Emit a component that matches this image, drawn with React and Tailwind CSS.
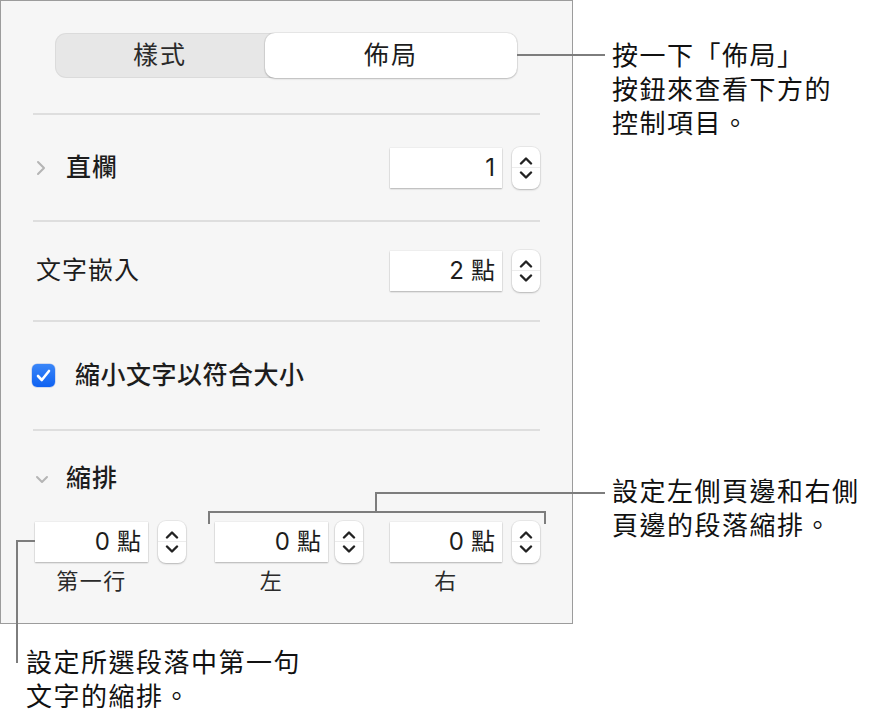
import React from "react";

const font = { fontFamily: '"Inter", "Noto Sans CJK TC", sans-serif' };

function Up() {
  return (
    <svg width="14" height="9" viewBox="0 0 14 9" fill="none">
      <polyline points="2,7.5 7,2.5 12,7.5" stroke="#222" strokeWidth="2.4" strokeLinecap="round" strokeLinejoin="round" />
    </svg>
  );
}

function Down() {
  return (
    <svg width="14" height="9" viewBox="0 0 14 9" fill="none">
      <polyline points="2,1.5 7,6.5 12,1.5" stroke="#222" strokeWidth="2.4" strokeLinecap="round" strokeLinejoin="round" />
    </svg>
  );
}

function Stepper({ className = "" }) {
  return (
    <div className={`flex h-[42px] w-[28px] shrink-0 flex-col items-center rounded-[8px] bg-white shadow-[0_0_0_1px_rgba(0,0,0,0.05),0_1px_2px_rgba(0,0,0,0.22)] ${className}`}>
      <div className="flex h-[20px] items-end justify-center pb-[2px]">
        <Up />
      </div>
      <div className="h-px w-full bg-[#ececec]" />
      <div className="flex h-[21px] items-start justify-center pt-[3px]">
        <Down />
      </div>
    </div>
  );
}

function Field({ value, unit, className = "" }) {
  return (
    <div className={`flex h-[40px] shrink-0 items-center justify-end gap-[7px] bg-white pr-[7px] text-[24px] text-[#1d1d1d] shadow-[0_0_0_0.5px_rgba(0,0,0,0.06),0_1px_1.5px_rgba(0,0,0,0.25)] ${className}`}>
      <span>{value}</span>
      {unit && <span>{unit}</span>}
    </div>
  );
}

function Divider() {
  return <div className="h-[2px] bg-[#dedede]" />;
}

export default function App() {
  return (
    <div className="relative h-[713px] w-[870px] overflow-hidden bg-white" style={font}>
      {/* panel */}
      <div className="h-[624px] w-[573px] border border-[#9c9c9c] bg-[#f6f6f6] px-[32px]">
        {/* segmented */}
        <div className="ml-[22px] mr-[23px] mt-[32px] flex h-[45px] rounded-[11px] bg-[#e7e7e7] shadow-[inset_0_0_0_1px_rgba(0,0,0,0.05)]">
          <div className="flex w-[210px] items-center justify-center text-[25px] tracking-[2px] text-[#2a2a2a]">樣式</div>
          <div className="flex flex-1 items-center justify-center rounded-[10px] bg-white text-[25px] tracking-[2px] text-[#1d1d1d] shadow-[0_0_0_1px_rgba(0,0,0,0.06),0_1px_2px_rgba(0,0,0,0.2)]">佈局</div>
        </div>

        <div className="mt-[35px]">
          <Divider />
        </div>

        {/* 直欄 */}
        <div className="flex h-[105px] items-center">
          <svg className="ml-[3px]" width="10" height="16" viewBox="0 0 10 16" fill="none">
            <polyline points="2,2 8,8 2,14" stroke="#b5b5b5" strokeWidth="2" strokeLinecap="round" strokeLinejoin="round" />
          </svg>
          <span className="ml-[20px] text-[25px] font-medium tracking-[1px] text-[#1d1d1d]">直欄</span>
          <Field value="1" className="ml-auto w-[112px]" />
          <Stepper className="ml-[10px]" />
        </div>
        <Divider />

        {/* 文字嵌入 */}
        <div className="flex h-[98px] items-center">
          <span className="ml-[3px] text-[25px] tracking-[1px] text-[#1d1d1d]">文字嵌入</span>
          <Field value="2" unit="點" className="ml-auto w-[112px]" />
          <Stepper className="ml-[10px]" />
        </div>
        <Divider />

        {/* checkbox */}
        <div className="flex h-[107px] items-center">
          <div className="-ml-px flex h-[23px] w-[23px] items-center justify-center rounded-[5px] bg-[linear-gradient(#3a86f8,#0f62f2)] shadow-[0_0_0_0.5px_rgba(0,60,200,0.3)]">
            <svg width="15" height="13" viewBox="0 0 15 13" fill="none">
              <polyline points="2,7 5.8,11 13,2" stroke="#fff" strokeWidth="2.6" strokeLinecap="round" strokeLinejoin="round" />
            </svg>
          </div>
          <span className="ml-[20px] text-[25px] font-medium tracking-[0.5px] text-[#1d1d1d]">縮小文字以符合大小</span>
        </div>
        <Divider />

        {/* 縮排 */}
        <div className="flex h-[91px] items-center pt-[4px]">
          <svg className="ml-[2px]" width="14" height="10" viewBox="0 0 14 10" fill="none">
            <polyline points="2,3 7,8 12,3" stroke="#b5b5b5" strokeWidth="2" strokeLinecap="round" strokeLinejoin="round" />
          </svg>
          <span className="ml-[17px] text-[25px] font-medium tracking-[1px] text-[#1d1d1d]">縮排</span>
        </div>
        <div className="flex h-[40px] items-center">
          <Field value="0" unit="點" className="ml-[2px] w-[113px]" />
          <Stepper className="ml-[10px]" />
          <Field value="0" unit="點" className="ml-[29px] w-[113px]" />
          <Stepper className="ml-[7px]" />
          <Field value="0" unit="點" className="ml-[27px] w-[112px]" />
          <Stepper className="ml-[10px]" />
        </div>
        <div className="flex h-[38px] items-center text-[22px] tracking-[1.5px] text-[#2a2a2a]">
          <div className="ml-[2px] w-[113px] text-center">第一行</div>
          <div className="ml-[67px] w-[113px] text-center">左</div>
          <div className="ml-[62px] w-[112px] text-center">右</div>
        </div>
      </div>

      {/* callout lines */}
      <div className="absolute left-[517px] top-[54px] h-[2px] w-[88px] bg-[#7d7d7d]" />

      <div className="absolute left-[208px] top-[511px] h-[13px] w-[338px] border-x-2 border-t-2 border-[#7d7d7d]" />
      <div className="absolute left-[375px] top-[492px] h-[20px] w-[2px] bg-[#7d7d7d]" />
      <div className="absolute left-[375px] top-[492px] h-[2px] w-[230px] bg-[#7d7d7d]" />

      <div className="absolute left-[16px] top-[540px] h-[123px] w-[19px] border-l-2 border-t-2 border-[#7d7d7d]" />

      {/* callout texts */}
      <div className="absolute left-[612px] top-[39px] text-[26px] leading-[34px] tracking-[1.5px] text-[#111]">
        <p>按一下「佈局」</p>
        <p>按鈕來查看下方的</p>
        <p>控制項目。</p>
      </div>
      <div className="absolute left-[612px] top-[475px] text-[26px] leading-[34px] tracking-[1.5px] text-[#111]">
        <p>設定左側頁邊和右側</p>
        <p>頁邊的段落縮排。</p>
      </div>
      <div className="absolute left-[26px] top-[646px] text-[26px] leading-[34px] tracking-[1.5px] text-[#111]">
        <p>設定所選段落中第一句</p>
        <p>文字的縮排。</p>
      </div>
    </div>
  );
}
